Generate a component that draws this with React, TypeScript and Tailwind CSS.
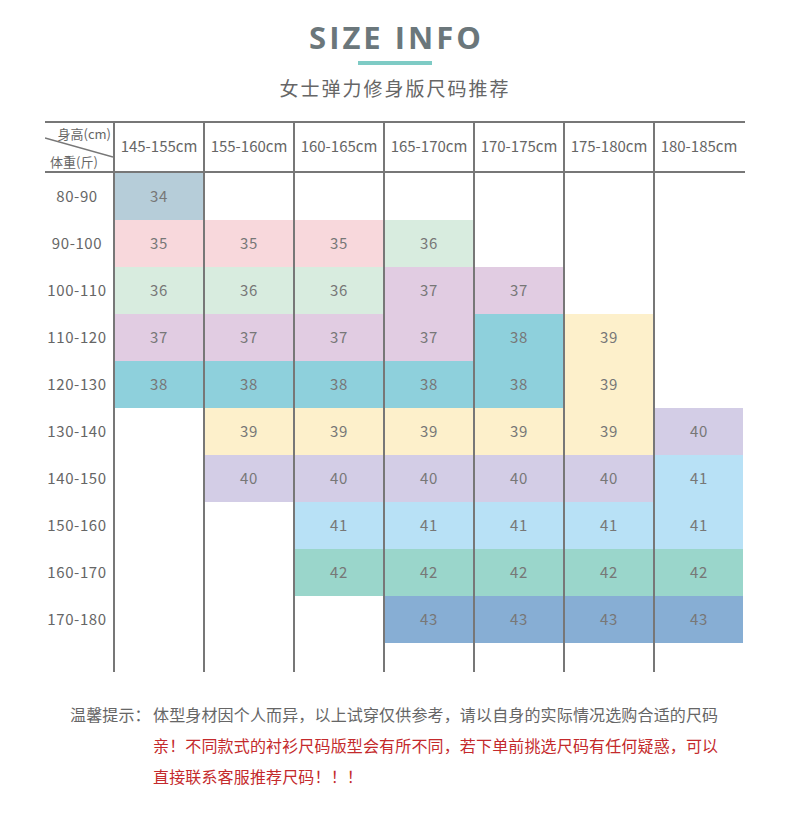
const heights = [
  "145-155cm",
  "155-160cm",
  "160-165cm",
  "165-170cm",
  "170-175cm",
  "175-180cm",
  "180-185cm",
];

const rows: [string, (number | null)[]][] = [
  ["80-90", [34, null, null, null, null, null, null]],
  ["90-100", [35, 35, 35, 36, null, null, null]],
  ["100-110", [36, 36, 36, 37, 37, null, null]],
  ["110-120", [37, 37, 37, 37, 38, 39, null]],
  ["120-130", [38, 38, 38, 38, 38, 39, null]],
  ["130-140", [null, 39, 39, 39, 39, 39, 40]],
  ["140-150", [null, 40, 40, 40, 40, 40, 41]],
  ["150-160", [null, null, 41, 41, 41, 41, 41]],
  ["160-170", [null, null, 42, 42, 42, 42, 42]],
  ["170-180", [null, null, null, 43, 43, 43, 43]],
];

const fills: Record<number, string> = {
  34: "bg-[#b6cdd9]",
  35: "bg-[#f8d8dc]",
  36: "bg-[#d8ecdf]",
  37: "bg-[#e1cce2]",
  38: "bg-[#8ed0dc]",
  39: "bg-[#fdf0cb]",
  40: "bg-[#d3cde6]",
  41: "bg-[#b8e1f6]",
  42: "bg-[#9ad6cb]",
  43: "bg-[#87aed4]",
};

const font = { fontFamily: '"Noto Sans CJK SC", "Noto Sans", sans-serif' };

const App = () => {
  return (
    <div className="w-[790px] h-[820px] bg-white" style={font}>
      {/* title */}
      <div className="pt-[18px] flex flex-col items-center">
        <h1
          className="text-[31px] leading-[38px] font-bold tracking-[3px] pl-[3px] text-[#6b777b]"
          style={{ fontFamily: '"Open Sans", sans-serif' }}
        >
          SIZE INFO
        </h1>
        <div className="mt-[5px] w-[74px] h-[4px] bg-[#7ecbc5]" />
        <p className="mt-[10px] text-[19px] leading-[26px] tracking-[2px] text-[#666]">
          女士弹力修身版尺码推荐
        </p>
      </div>

      {/* size table */}
      <div className="mt-[20px] ml-[45px] w-[700px] text-[#666]">
        <div className="flex h-[52px] border-y-2 border-[#777]">
          <div className="relative w-[68px] shrink-0">
            <svg className="absolute left-0 top-0" width="68" height="48">
              <line x1="0" y1="15" x2="68" y2="34" stroke="#777" strokeWidth="1.6" />
            </svg>
            <span className="absolute right-[2px] top-[3px] text-[13px] leading-[16px]">
              身高(cm)
            </span>
            <span className="absolute left-[5px] bottom-[1px] text-[13px] leading-[16px]">
              体重(斤)
            </span>
          </div>
          {heights.map((h) => (
            <div
              key={h}
              className="w-[90px] shrink-0 border-l-2 border-[#777] flex items-center justify-center text-[15px] pb-[1px]"
            >
              {h}
            </div>
          ))}
        </div>

        {rows.map(([w, cells]) => (
          <div key={w} className="flex h-[47px]">
            <div className="w-[68px] shrink-0 flex items-center justify-center pr-[4px] text-[15px] tracking-[0.6px]">
              {w}
            </div>
            {cells.map((v, i) => (
              <div key={i} className="w-[90px] shrink-0 border-l-2 border-[#777]">
                {v !== null && (
                  <div
                    className={`h-full flex items-center justify-center text-[15px] tracking-[0.6px] text-[#777] ${fills[v]}`}
                  >
                    {v}
                  </div>
                )}
              </div>
            ))}
          </div>
        ))}

        <div className="flex h-[29px]">
          <div className="w-[68px] shrink-0" />
          {heights.map((h) => (
            <div key={h} className="w-[90px] shrink-0 border-l-2 border-[#777]" />
          ))}
        </div>
      </div>

      {/* note */}
      <div className="mt-[27px] ml-[70px] flex text-[16px] leading-[31px] tracking-[0.15px]">
        <span className="text-[#666] shrink-0 w-[83px]">温馨提示：</span>
        <div className="w-[575px]">
          <p className="text-[#666]">
            体型身材因个人而异，以上试穿仅供参考，请以自身的实际情况选购合适的尺码
          </p>
          <p className="text-[#c42a2c]">
            亲！不同款式的衬衫尺码版型会有所不同，若下单前挑选尺码有任何疑惑，可以
            <br />
            直接联系客服推荐尺码！！！
          </p>
        </div>
      </div>
    </div>
  );
};

export default App;
